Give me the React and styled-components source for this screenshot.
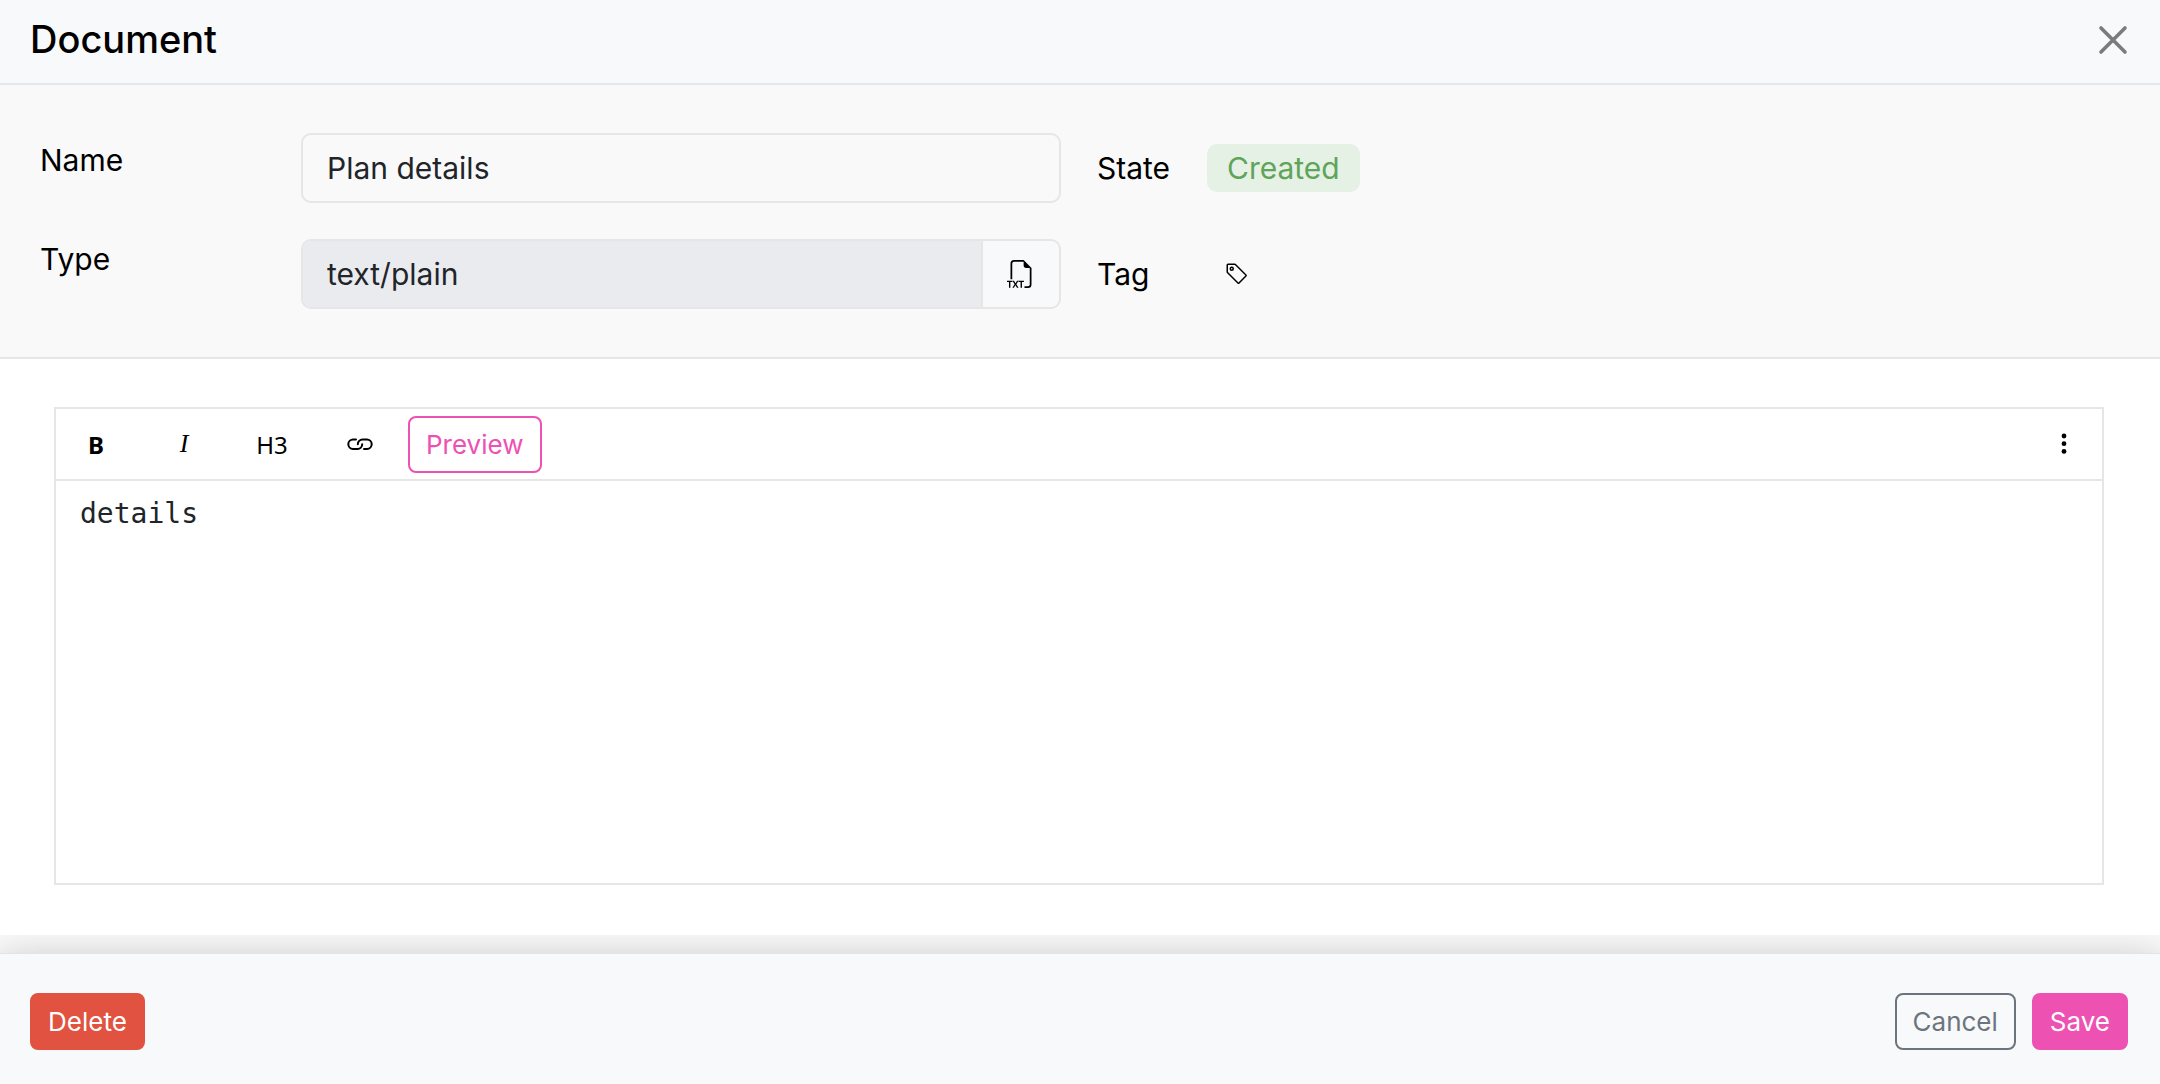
import styled, { createGlobalStyle } from "styled-components";
import { useState } from "react";
import { BsFiletypeTxt, BsTag } from "react-icons/bs";

const GlobalStyle = createGlobalStyle`
  * {
    box-sizing: border-box;
  }
  body {
    margin: 0;
    font-family: "Inter", "Liberation Sans", sans-serif;
    font-size: 30px;
    color: #000;
    background-color: #fff;
  }
  button, input, textarea {
    font: inherit;
    margin: 0;
  }
`;

const Container = styled.div`
  min-height: 100vh;
  display: flex;
  flex-direction: column;
`;

const Header = styled.header`
  display: flex;
  align-items: center;
  justify-content: space-between;
  padding: 12px 32px 16px 30px;
  background-color: #f8f9fb;
  border-bottom: 2px solid #e6e7e9;
`;

const Title = styled.h1`
  margin: 0;
  font-size: 38px;
  line-height: 55px;
  font-weight: 500;
`;

const IconButton = styled.button`
  display: flex;
  align-items: center;
  justify-content: center;
  padding: 0;
  border: none;
  background: none;
  color: ${(props) => props.$color || "#000"};
  cursor: pointer;
`;

const Details = styled.section`
  display: grid;
  grid-template-columns: 225px 760px 74px 1fr;
  column-gap: 36px;
  row-gap: 36px;
  padding: 48px 40px;
  background-color: #f9f9f9;
  border-bottom: 2px solid #e6e6e6;
`;

const Label = styled.label`
  line-height: 40px;
  padding-top: ${(props) => props.$top || 0}px;
`;

const Caption = styled.span`
  align-self: center;
  line-height: 40px;
`;

const Input = styled.input`
  width: 100%;
  height: 70px;
  padding: 0 24px;
  border: 2px solid #e6e6e6;
  border-radius: 10px;
  background-color: transparent;
  color: #212529;
  outline: none;
`;

const InputGroup = styled.div`
  display: flex;
  height: 70px;
  border: 2px solid #e6e6e6;
  border-radius: 10px;
  background-color: #f8f9fb;
  overflow: hidden;
`;

const GroupInput = styled.input`
  flex: 1;
  min-width: 0;
  padding: 0 24px;
  border: none;
  border-right: 2px solid #e6e6e6;
  background-color: #eaebef;
  color: #212529;
  outline: none;
`;

const GroupIcon = styled.span`
  width: 76px;
  display: flex;
  align-items: center;
  justify-content: center;
`;

const Value = styled.div`
  display: flex;
  align-items: center;
`;

const Badge = styled.span`
  padding: 0 20px;
  line-height: 48px;
  border-radius: 10px;
  background-color: #e5f1e5;
  color: #5fa458;
`;

const TagButton = styled(IconButton)`
  padding: 0 18px;
`;

const Body = styled.main`
  flex: 1;
  display: flex;
  padding: 48px 56px 50px 54px;
`;

const Editor = styled.div`
  flex: 1;
  display: flex;
  flex-direction: column;
  border: 2px solid #e6e6e6;
`;

const Toolbar = styled.div`
  display: flex;
  align-items: center;
  justify-content: space-between;
  height: 72px;
  padding-right: 22px;
  border-bottom: 2px solid #e6e6e6;
`;

const Tools = styled.div`
  display: flex;
  align-items: center;
  gap: 8px;
`;

const Tool = styled(IconButton)`
  width: 80px;
  height: 57px;
  font-family: ${(props) => (props.$serif ? '"Liberation Serif", serif' : '"Noto Sans", sans-serif')};
  font-size: ${(props) => (props.$serif ? 26 : 24)}px;
  font-weight: ${(props) => (props.$bold ? 700 : 400)};
  font-style: ${(props) => (props.$serif ? "italic" : "normal")};
`;

const Button = styled.button`
  height: 57px;
  padding: 0 16px;
  border: 2px solid ${(props) => props.$border || props.$bg};
  border-radius: 8px;
  background-color: ${(props) => props.$bg || "transparent"};
  color: ${(props) => props.$color || "#fff"};
  font-size: 26px;
  cursor: pointer;
`;

const TextArea = styled.textarea`
  flex: 1;
  padding: 13px 24px;
  border: none;
  outline: none;
  resize: none;
  background-color: #fff;
  color: #212529;
  font-family: "DejaVu Sans Mono", monospace;
  font-size: 28px;
  line-height: 40px;
`;

const FooterWrap = styled.div`
  padding-top: 18px;
  background-color: #f9f9f9;
  overflow: hidden;
`;

const Footer = styled.footer`
  display: flex;
  align-items: center;
  justify-content: space-between;
  padding: 39px 32px 34px 30px;
  background-color: #f8f9fb;
  border-top: 1px solid #e4e4e4;
  box-shadow: 0 0 32px rgba(0, 0, 0, 0.17);
`;

const Actions = styled.div`
  display: flex;
  gap: 16px;
`;

const CloseIcon = () => (
  <svg width="30" height="30" viewBox="0 0 30 30" stroke="currentColor" strokeWidth="3.6" strokeLinecap="round">
    <path d="M3 3l24 24M27 3L3 27" />
  </svg>
);

const LinkIcon = () => (
  <svg width="28" height="16" viewBox="0 0 28 16" fill="none" stroke="currentColor" strokeWidth="2" strokeLinecap="round">
    <path d="M10 3.500H7a4.700 4.700 0 0 0 0 9.400h4.500a4.700 4.700 0 0 0 4.700-4.700" />
    <path d="M18 12.900h3a4.700 4.700 0 0 0 0-9.400h-4.500a4.700 4.700 0 0 0-4.700 4.700" />
  </svg>
);

const DotsIcon = () => (
  <svg width="32" height="24" viewBox="0 0 32 24" fill="currentColor">
    <circle cx="16" cy="4" r="2.4" />
    <circle cx="16" cy="11.7" r="2.4" />
    <circle cx="16" cy="19.4" r="2.4" />
  </svg>
);

const App = () => {
  const [name, setName] = useState("Plan details");
  const [text, setText] = useState("details");

  return (
    <>
      <GlobalStyle />
      <Container>
        <Header>
          <Title>Document</Title>
          <IconButton aria-label="Close" $color="#7b7b7c">
            <CloseIcon />
          </IconButton>
        </Header>
        <Details>
          <Label htmlFor="name" $top={7}>Name</Label>
          <Input id="name" value={name} onChange={(e) => setName(e.target.value)} />
          <Caption>State</Caption>
          <Value>
            <Badge>Created</Badge>
          </Value>
          <Label htmlFor="type">Type</Label>
          <InputGroup>
            <GroupInput id="type" value="text/plain" readOnly />
            <GroupIcon>
              <BsFiletypeTxt size={28} />
            </GroupIcon>
          </InputGroup>
          <Caption>Tag</Caption>
          <Value>
            <TagButton aria-label="Edit tag">
              <BsTag size={24} />
            </TagButton>
          </Value>
        </Details>
        <Body>
          <Editor>
            <Toolbar>
              <Tools>
                <Tool $bold>B</Tool>
                <Tool $serif>I</Tool>
                <Tool>H3</Tool>
                <Tool aria-label="Link"><LinkIcon /></Tool>
                <Button $border="#ed51b2" $color="#ed51b2">Preview</Button>
              </Tools>
              <IconButton aria-label="More">
                <DotsIcon />
              </IconButton>
            </Toolbar>
            <TextArea aria-label="Content" value={text} onChange={(e) => setText(e.target.value)} />
          </Editor>
        </Body>
        <FooterWrap>
          <Footer>
            <Button $bg="#e15241">Delete</Button>
            <Actions>
              <Button $border="#6c757d" $color="#6c757d">Cancel</Button>
              <Button $bg="#ed51b2">Save</Button>
            </Actions>
          </Footer>
        </FooterWrap>
      </Container>
    </>
  );
};

export default App;
